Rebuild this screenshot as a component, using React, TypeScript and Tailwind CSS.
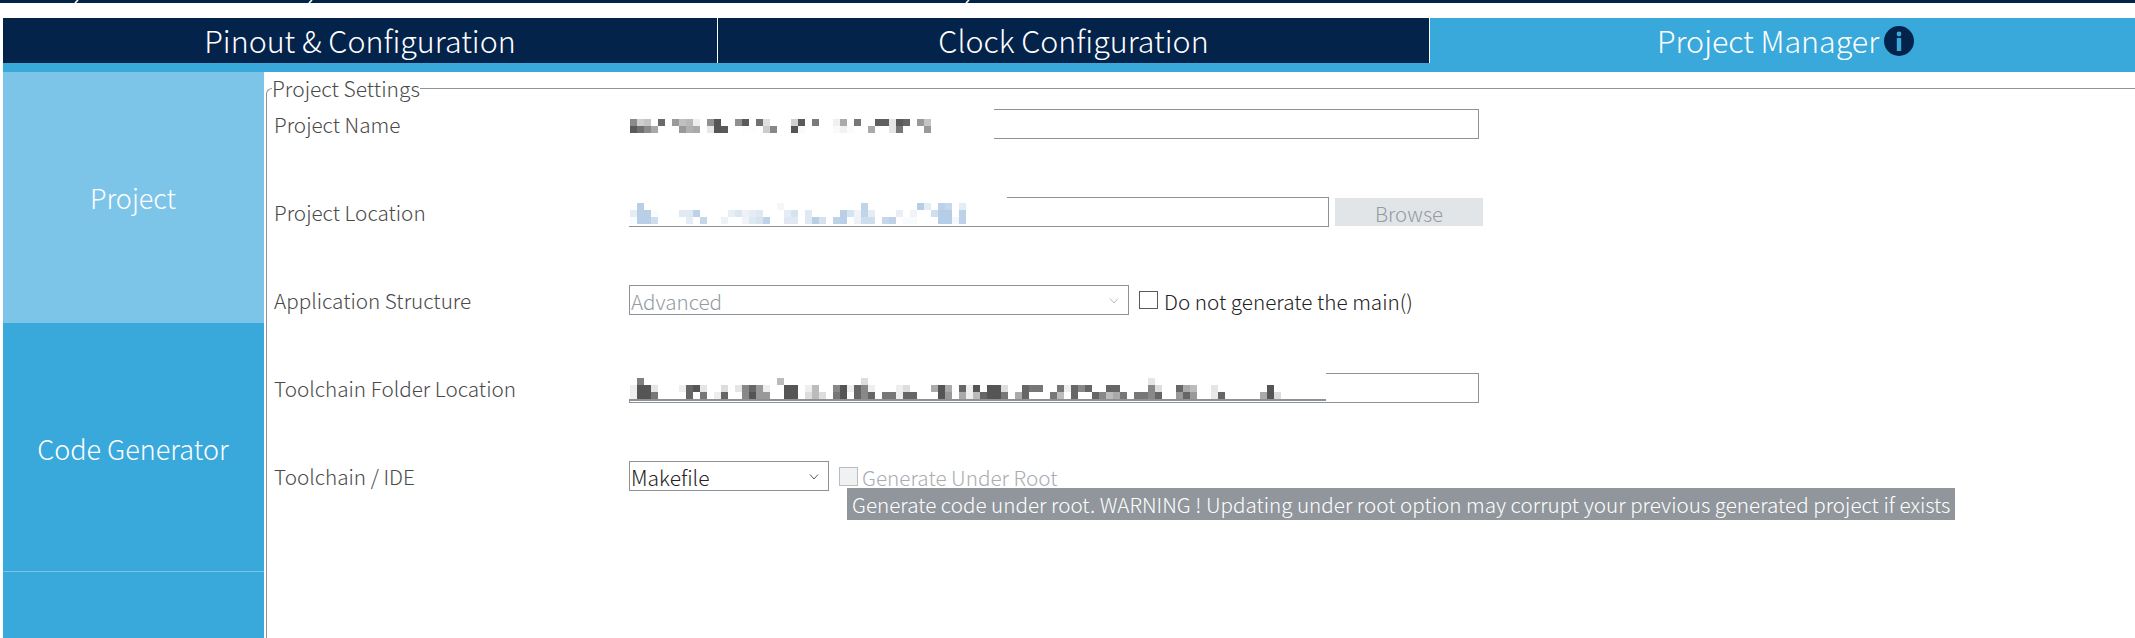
const g = (rows: [number, number, string][]) => rows;

const nameCells: [number, number, string][] = g([
  [0,0,'#8a8a8a'],[1,0,'#cfcfcf'],[2,0,'#c4c4c4'],[4,0,'#6a6a6a'],[6,0,'#9a9a9a'],[7,0,'#c0c0c0'],[8,0,'#b8b8b8'],[9,0,'#eeeeee'],[11,0,'#909090'],[12,0,'#555555'],[15,0,'#8f8f8f'],[16,0,'#5a5a5a'],[18,0,'#707070'],[19,0,'#e0e0e0'],[23,0,'#d0d0d0'],[24,0,'#5a5a5a'],[26,0,'#7a7a7a'],[29,0,'#f0f0f0'],[30,0,'#aaaaaa'],[32,0,'#777777'],[35,0,'#5f5f5f'],[36,0,'#5f5f5f'],[37,0,'#e5e5e5'],[38,0,'#5a5a5a'],[39,0,'#666666'],[41,0,'#999999'],[42,0,'#c5c5c5'],
  [0,1,'#5a5a5a'],[1,1,'#707070'],[2,1,'#8a8a8a'],[3,1,'#a8a8a8'],[7,1,'#999999'],[8,1,'#b0b0b0'],[9,1,'#aaaaaa'],[11,1,'#e8e8e8'],[12,1,'#555555'],[13,1,'#5a5a5a'],[16,1,'#fdfdfd'],[17,1,'#fdfdfd'],[19,1,'#cccccc'],[20,1,'#888888'],[23,1,'#555555'],[24,1,'#fafafa'],[29,1,'#fafafa'],[30,1,'#f2f2f2'],[31,1,'#fbfbfb'],[34,1,'#aaaaaa'],[37,1,'#e5e5e5'],[38,1,'#777777'],[42,1,'#999999'],
]);

const locCells: [number, number, string][] = g([
  [1,0,'#b8cfe6'],[21,0,'#f5f6f8'],[33,0,'#c0d4e8'],[41,0,'#b5cde6'],[42,0,'#e4edf5'],[44,0,'#bcd2e8'],[45,0,'#c5d8eb'],[47,0,'#e4edf6'],
  [0,1,'#e4edf6'],[1,1,'#b8cfe6'],[2,1,'#b8cfe6'],[3,1,'#fafbfc'],[7,1,'#dfe8f3'],[8,1,'#dfe8f3'],[9,1,'#bdd2e8'],[14,1,'#e6eef6'],[15,1,'#dae6f2'],[16,1,'#edf2f8'],[17,1,'#e4ecf5'],[18,1,'#dfe9f3'],[22,1,'#e4edf6'],[23,1,'#d5e2ef'],[25,1,'#dfe9f3'],[30,1,'#b8cfe6'],[31,1,'#d6e4f1'],[32,1,'#f0f4f8'],[33,1,'#c0d4e8'],[34,1,'#e4edf6'],[38,1,'#e8eff7'],[40,1,'#f0f4f8'],[43,1,'#d0dfee'],[44,1,'#b5cde6'],[45,1,'#b5cde6'],[47,1,'#bdd2e8'],
  [0,2,'#fafbfc'],[1,2,'#b8cfe6'],[2,2,'#b8cfe6'],[3,2,'#cfdeee'],[8,2,'#e4edf6'],[10,2,'#c5d8eb'],[13,2,'#eef2f7'],[16,2,'#f0f4f9'],[17,2,'#dfe9f3'],[18,2,'#d8e4f0'],[19,2,'#bfd3e8'],[22,2,'#e0e9f3'],[23,2,'#e0e9f3'],[25,2,'#dfe9f3'],[26,2,'#b8cfe6'],[27,2,'#d6e2ef'],[29,2,'#bfd3e8'],[30,2,'#b8cfe6'],[32,2,'#eef2f7'],[33,2,'#cfdeee'],[34,2,'#cfdeee'],[36,2,'#c5d8eb'],[37,2,'#bdd2e8'],[39,2,'#f8fafb'],[40,2,'#f8fafb'],[44,2,'#b5cde6'],[45,2,'#b5cde6'],[46,2,'#f5f8fb'],[47,2,'#bdd2e8'],
]);

const toolCells: [number, number, string][] = g([
  [1,0,'#808080'],[21,0,'#bbbbbb'],[33,0,'#dddddd'],[74,0,'#e5e5e5'],
  [0,1,'#eeeeee'],[1,1,'#555555'],[2,1,'#555555'],[3,1,'#e5e5e5'],[7,1,'#eeeeee'],[8,1,'#666666'],[9,1,'#555555'],[10,1,'#e5e5e5'],[13,1,'#dddddd'],[15,1,'#e5e5e5'],[16,1,'#888888'],[17,1,'#666666'],[18,1,'#999999'],[19,1,'#eeeeee'],[22,1,'#555555'],[23,1,'#555555'],[25,1,'#eeeeee'],[26,1,'#bbbbbb'],[29,1,'#888888'],[30,1,'#555555'],[31,1,'#eeeeee'],[32,1,'#666666'],[33,1,'#888888'],[34,1,'#eeeeee'],[38,1,'#eeeeee'],[39,1,'#dddddd'],[43,1,'#aaaaaa'],[44,1,'#555555'],[45,1,'#aaaaaa'],[47,1,'#666666'],[48,1,'#eeeeee'],[49,1,'#555555'],[51,1,'#555555'],[52,1,'#555555'],[53,1,'#dddddd'],[56,1,'#666666'],[57,1,'#777777'],[58,1,'#777777'],[61,1,'#777777'],[62,1,'#eeeeee'],[63,1,'#666666'],[64,1,'#888888'],[65,1,'#666666'],[68,1,'#666666'],[69,1,'#666666'],[74,1,'#888888'],[75,1,'#dddddd'],[78,1,'#666666'],[79,1,'#aaaaaa'],[80,1,'#bbbbbb'],[83,1,'#e5e5e5'],[91,1,'#555555'],
  [0,2,'#eeeeee'],[1,2,'#555555'],[2,2,'#555555'],[3,2,'#777777'],[8,2,'#666666'],[10,2,'#777777'],[12,2,'#eeeeee'],[13,2,'#666666'],[16,2,'#888888'],[17,2,'#555555'],[18,2,'#999999'],[19,2,'#999999'],[22,2,'#555555'],[23,2,'#555555'],[25,2,'#dddddd'],[26,2,'#bbbbbb'],[27,2,'#dddddd'],[29,2,'#777777'],[30,2,'#555555'],[32,2,'#666666'],[33,2,'#888888'],[34,2,'#666666'],[36,2,'#777777'],[37,2,'#777777'],[38,2,'#eeeeee'],[39,2,'#666666'],[40,2,'#666666'],[44,2,'#555555'],[45,2,'#999999'],[47,2,'#aaaaaa'],[48,2,'#eeeeee'],[49,2,'#bbbbbb'],[50,2,'#666666'],[51,2,'#555555'],[52,2,'#555555'],[53,2,'#777777'],[55,2,'#aaaaaa'],[56,2,'#666666'],[60,2,'#777777'],[61,2,'#bbbbbb'],[63,2,'#666666'],[66,2,'#666666'],[67,2,'#888888'],[68,2,'#bbbbbb'],[69,2,'#aaaaaa'],[70,2,'#777777'],[72,2,'#777777'],[73,2,'#777777'],[74,2,'#888888'],[75,2,'#666666'],[78,2,'#999999'],[79,2,'#666666'],[80,2,'#999999'],[83,2,'#e8e8e8'],[84,2,'#666666'],[90,2,'#aaaaaa'],[91,2,'#555555'],[92,2,'#dddddd'],
]);

function Mosaic({ cells, width, height }: { cells: [number, number, string][]; width: number; height: number }) {
  return (
    <svg width={width} height={height} shapeRendering="crispEdges" className="block">
      {cells.map(([c, r, f]) => (
        <rect key={`${c}-${r}`} x={c * 7} y={r * 7} width={7} height={7} fill={f} />
      ))}
    </svg>
  );
}

function Chevron({ color }: { color: string }) {
  return (
    <svg width="10" height="6" viewBox="0 0 10 6" fill="none" stroke={color} strokeWidth="1">
      <path d="M1 0.5 L5 5 L9 0.5" />
    </svg>
  );
}

function Label({ children }: { children: string }) {
  return <div className="w-[362px] pl-[7px] text-[20.7px] leading-[31px] font-light text-[#4a4a4a] shrink-0">{children}</div>;
}

export default function App() {
  return (
    <div
      className="h-[638px] w-[2135px] overflow-hidden bg-white flex flex-col"
      style={{ fontFamily: '"Noto Sans CJK SC", "Noto Sans", sans-serif' }}
    >
      <div className="relative h-[3px] bg-[#03234b] shrink-0">
        <svg width="2135" height="3" className="absolute inset-0 block">
          <path d="M75 3 L78 0 M309 3 L312 0 M966 3 L969 0" stroke="#ffffff" strokeWidth="1.6" />
        </svg>
      </div>
      <div className="h-[15px] shrink-0" />
      <div className="ml-[3px] flex flex-col shrink-0">
        <div className="flex h-[45px] text-[30.4px] leading-[45px] font-light text-white">
          <div className="w-[714px] bg-[#03234b] text-center">Pinout &amp; Configuration</div>
          <div className="w-[711px] ml-px bg-[#03234b] text-center">Clock Configuration</div>
          <div className="flex-1 ml-px bg-[#39a9dc] flex items-center justify-center gap-[5px] pl-[6px]">
            <span>Project Manager</span>
            <svg width="30" height="30" viewBox="0 0 30 30">
              <ellipse cx="15" cy="15" rx="15" ry="15" fill="#03234b" />
              <circle cx="15" cy="8" r="2.4" fill="#39a9dc" />
              <rect x="12.8" y="12" width="4.4" height="13" fill="#39a9dc" />
            </svg>
          </div>
        </div>
        <div className="h-[9px] bg-[#39a9dc]" />
      </div>
      <div className="flex flex-1 min-h-0 pl-[3px]">
        <div className="w-[261px] flex flex-col text-white text-[27px] font-light shrink-0">
          <div className="h-[251px] bg-[#7cc5e9] flex items-center justify-center pt-[2px] pr-px">Project</div>
          <div className="h-[248px] bg-[#39a9dc] flex items-center justify-center pt-[4px] pr-px">Code Generator</div>
          <div className="flex-1 bg-[#39a9dc] border-t border-[#7cc5e9]" />
        </div>
        <fieldset className="ml-[2px] mt-[2px] flex-1 min-w-0 border-t border-l border-[#8f9499] rounded-tl-[6px]">
          <legend className="ml-[5px] h-[28px] text-[21px] leading-[28px] font-light text-[#4a4a4a]">Project Settings</legend>
          <div className="flex flex-col gap-[58px] pt-[7px]">
            <div className="flex h-[30px]">
              <Label>Project Name</Label>
              <div className="relative w-[850px] h-[30px] border border-[#8c9299]">
                <div className="absolute left-[-1px] top-[-1px] w-[365px] h-[30px] bg-white pl-px pt-[10px]">
                  <Mosaic cells={nameCells} width={301} height={14} />
                </div>
              </div>
            </div>
            <div className="flex h-[30px]">
              <Label>Project Location</Label>
              <div className="relative w-[700px] h-[30px] border border-[#8c9299]">
                <div className="absolute left-[-1px] top-[-1px] w-[378px] h-[29px] bg-white pl-px pt-[6px]">
                  <Mosaic cells={locCells} width={336} height={21} />
                </div>
              </div>
              <div className="ml-[6px] mt-px w-[148px] h-[28px] pt-px bg-[#e2e5e8] text-[#949ba1] text-[20.4px] leading-[28px] font-light text-center">Browse</div>
            </div>
            <div className="flex h-[30px]">
              <Label>Application Structure</Label>
              <div className="w-[500px] h-[30px] border border-[#8c9299] flex items-center justify-between pl-px pr-[9px] pt-[2px] text-[20.6px] leading-[26px] font-light text-[#949ba1]">
                <span>Advanced</span>
                <Chevron color="#b4b9bd" />
              </div>
              <div className="ml-[10px] mt-[6px] w-[19px] h-[18px] border border-[#5a5a5a]" />
              <span className="ml-[6px] pt-[1px] text-[20.7px] leading-[30px] font-light text-[#222222]">Do not generate the main()</span>
            </div>
            <div className="flex h-[30px]">
              <Label>Toolchain Folder Location</Label>
              <div className="relative w-[850px] h-[30px] border border-[#8c9299]">
                <div className="absolute left-[-1px] top-[-1px] w-[697px] h-[28px] bg-white border-b-2 border-[#8a9197] pl-px pt-[5px]">
                  <Mosaic cells={toolCells} width={651} height={21} />
                </div>
              </div>
            </div>
            <div className="relative flex h-[30px]">
              <Label>Toolchain / IDE</Label>
              <div className="w-[200px] h-[30px] border border-[#8c9299] flex items-center justify-between pl-px pr-[9px] pt-[2px] text-[21px] leading-[26px] font-light text-[#222222]">
                <span>Makefile</span>
                <Chevron color="#555a5f" />
              </div>
              <div className="ml-[10px] mt-[6px] w-[19px] h-[19px] border border-[#b9bdc1] bg-[#f0f1f3]" />
              <span className="ml-[4px] pt-[1px] text-[20.7px] leading-[30px] font-light text-[#a8adb2]">Generate Under Root</span>
              <div className="absolute left-[580px] top-[27px] h-[32px] px-[5px] bg-[#90969b] text-white text-[20.64px] leading-[32px] font-light whitespace-nowrap">
                Generate code under root. WARNING ! Updating under root option may corrupt your previous generated project if exists
              </div>
            </div>
          </div>
        </fieldset>
      </div>
    </div>
  );
}
